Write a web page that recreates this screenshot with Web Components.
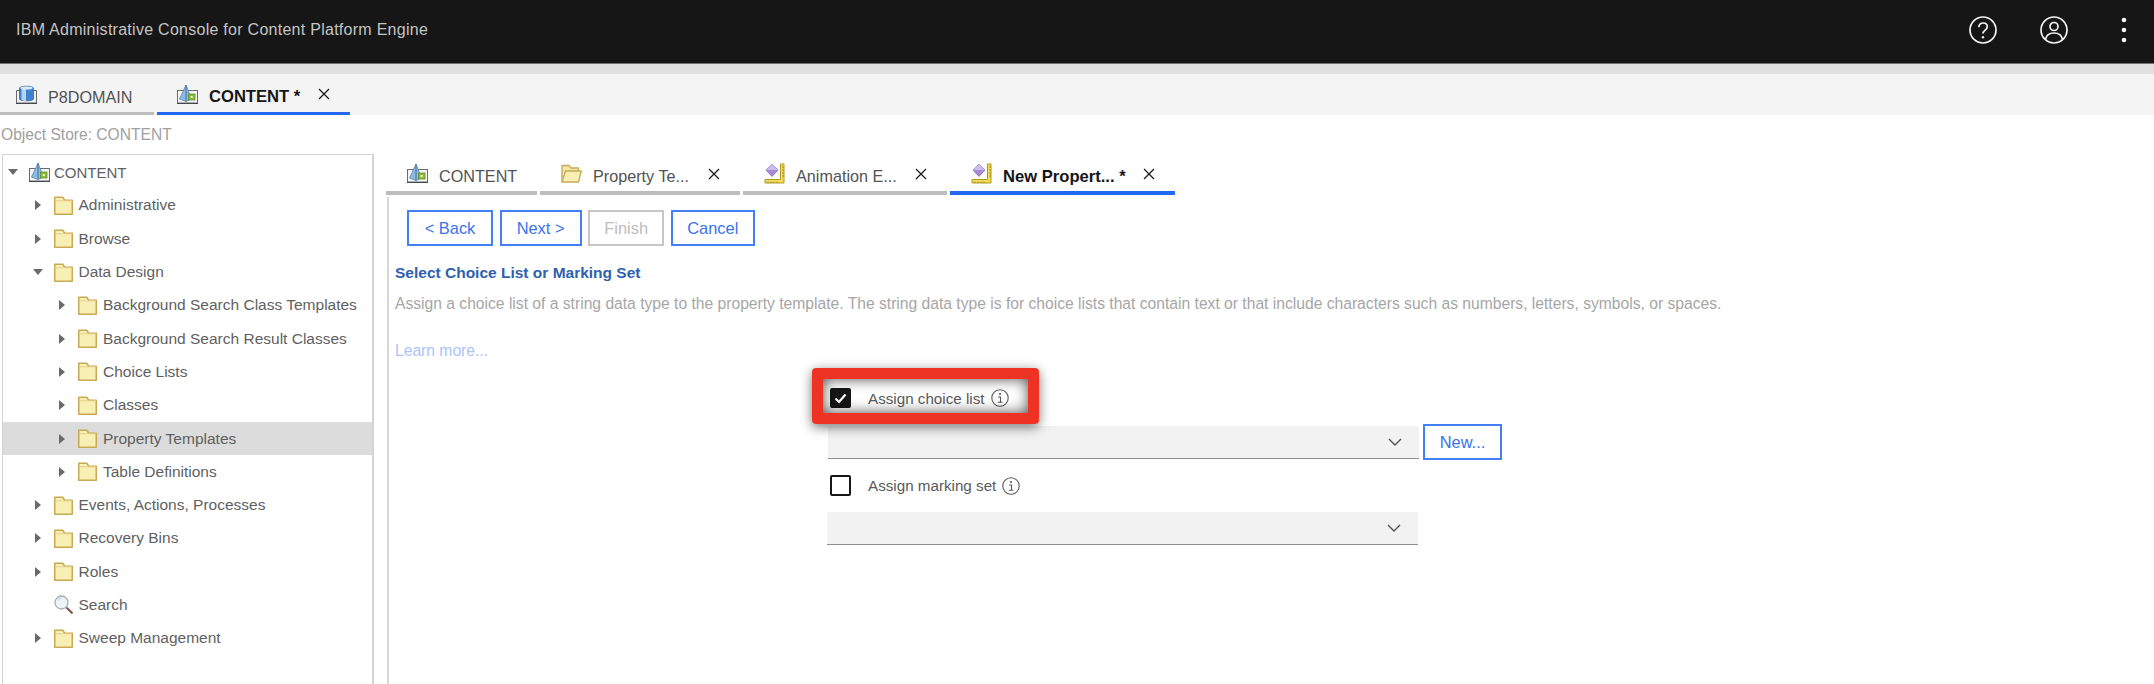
<!DOCTYPE html>
<html lang="en">
<head>
<meta charset="utf-8">
<title>IBM Administrative Console for Content Platform Engine</title>
<style>
  html, body { margin: 0; height: 100%; overflow: hidden; background: #fff; }
  body { font-family: "Liberation Sans", Arial, sans-serif; font-size: 15.5px; }
  console-app { height: 100%; }
</style>
</head>
<body>
<console-app></console-app>

<script>
const ICONS = {
  store: `<svg width="21" height="19" viewBox="0 0 21 19">
      <rect x=".5" y="5.500" width="20" height="12.500" fill="#f4f4f4" stroke="#6a6d70"/>
      <path d="M0 18h21v1H0z" fill="#44474b"/>
      <path d="M9 0 2.500 14l6.500 2.500L14.500 14z" fill="#8db9e4" stroke="#4a7cab" stroke-width=".7"/>
      <path d="M9 0v16.500" stroke="#2f5f90" stroke-width=".8"/>
      <rect x="11.500" y="9" width="6.500" height="6" fill="#8cbb3c" stroke="#5e8a22" stroke-width=".7"/>
      <rect x="13.700" y="11" width="2" height="2" fill="#eef5d8"/>
    </svg>`,
  cylinder: `<svg width="21" height="19" viewBox="0 0 21 19">
      <path d="M.5 5.500h20V18H.5z" fill="#f2f2f2" stroke="#6a6d70"/>
      <path d="M0 18h21v1H0z" fill="#44474b"/>
      <path d="M3.500 3C3.500.6 17.500.6 17.500 3v11c0 2.400-14 2.400-14 0z" fill="#3f80d0" stroke="#2b5f9f" stroke-width=".7"/>
      <path d="M5.500 3.500h4.500v12.500c-2.200 0-4.500-.6-4.500-1.500z" fill="#b5d4f4"/>
      <ellipse cx="10.500" cy="3" rx="6.300" ry="1.600" fill="#dbe9f8"/>
    </svg>`,
  folder: `<svg width="19" height="19" viewBox="0 0 19 19">
      <path d="M.75 18.250V1.250h8l2 3h7.500v14z" fill="#f8efb4" stroke="#c8a955" stroke-width="1.500" stroke-linejoin="round"/>
      <path d="M1.500 4.750h16.250" stroke="#e3cf8b"/>
    </svg>`,
  folderOpen: `<svg width="21" height="19" viewBox="0 0 21 19">
      <path d="M1 18V1.500h7l2 2.500h7.500v3" fill="#f2e6a8" stroke="#c8a955" stroke-width="1.300" stroke-linejoin="round"/>
      <path d="M1 18 4.500 7H20.300L17.500 18z" fill="#f8efb4" stroke="#c8a955" stroke-width="1.300" stroke-linejoin="round"/>
    </svg>`,
  template: `<svg width="21" height="21" viewBox="0 0 21 21">
      <path d="M16.500 1H20v19H1v-3.500h15.500z" fill="#f3dc5a" stroke="#b09a22"/>
      <path d="M4 18.500v1.500M7 18.500v1.500M10 18.500v1.500M13 18.500v1.500M18 4h2M18 7h2M18 10h2M18 13h2" stroke="#8f7d18" stroke-width=".8"/>
      <path d="M8 1 14 7 8 13.500 2 7z" fill="#a68ad8" stroke="#7557b0" stroke-width=".7"/>
      <path d="M8 1 2 7h12z" fill="#cdbcf0"/>
    </svg>`,
  search: `<svg width="20" height="20" viewBox="0 0 20 20">
      <circle cx="7.500" cy="7.500" r="6.500" fill="#eef3f7" stroke="#a9adb1" stroke-width="1.300"/>
      <path d="M4 5.500a4.500 4.500 0 0 1 4-2.500" fill="none" stroke="#c6ccd2" stroke-width="1.200"/>
      <path d="m12.500 12.500 6 6" stroke="#8a4b3f" stroke-width="2"/>
    </svg>`,
  close: `<svg width="12" height="12" viewBox="0 0 12 12"><path d="m1 1 10 10M11 1 1 11" stroke="#161616" stroke-width="1.200" fill="none"/></svg>`,
  info: `<svg width="18" height="18" viewBox="0 0 18 18">
      <circle cx="9" cy="9" r="8.200" fill="none" stroke="#5a5a5a" stroke-width="1.100"/>
      <circle cx="9" cy="5" r="1.100" fill="#5a5a5a"/>
      <path d="M7 8h2.500v5M6.800 13.200h4.600" fill="none" stroke="#5a5a5a" stroke-width="1.100"/>
    </svg>`,
  chevron: `<svg width="14" height="8" viewBox="0 0 14 8"><path d="m1 1 6 6 6-6" fill="none" stroke="#525252" stroke-width="1.400"/></svg>`
};

class ConsoleHeader extends HTMLElement {
  constructor() {
    super();
    this.attachShadow({ mode: 'open' }).innerHTML = `
      <style>
        :host { display: flex; align-items: center; justify-content: space-between; box-sizing: border-box;
                height: 64px; background: #161616; border-bottom: 1px solid #6f6f6f; padding: 0 26px 3px 16px; flex: none; }
        .title { color: #c4c4c4; font-size: 16px; letter-spacing: .27px; }
        .actions { display: flex; align-items: center; gap: 43px; }
        svg { display: block; }
      </style>
      <span class="title">IBM Administrative Console for Content Platform Engine</span>
      <div class="actions">
        <svg width="28" height="28" viewBox="0 0 28 28" fill="none" stroke="#f4f4f4" stroke-width="1.700">
          <circle cx="14" cy="14" r="13"/>
          <path d="M9.800 11.200c0-2.600 1.900-4.200 4.300-4.200 2.500 0 4.200 1.600 4.200 3.700 0 3.300-4.300 3.400-4.300 6.800"/>
          <circle cx="14" cy="21.200" r="1.200" fill="#f4f4f4" stroke="none"/>
        </svg>
        <svg width="28" height="28" viewBox="0 0 28 28" fill="none" stroke="#f4f4f4" stroke-width="1.700">
          <circle cx="14" cy="14" r="13"/>
          <circle cx="14" cy="10.500" r="4"/>
          <path d="M5.500 23.500c.8-4.500 3.500-6.500 8.500-6.500s7.700 2 8.500 6.500"/>
        </svg>
        <svg width="8" height="26" viewBox="0 0 8 26" fill="#f4f4f4" style="margin-left:9px">
          <circle cx="4" cy="3" r="2.300"/><circle cx="4" cy="13" r="2.300"/><circle cx="4" cy="23" r="2.300"/>
        </svg>
      </div>`;
  }
}

class TabItem extends HTMLElement {
  connectedCallback() {
    const active = this.hasAttribute('active');
    const closable = this.hasAttribute('closable');
    const w = this.getAttribute('width');
    this.attachShadow({ mode: 'open' }).innerHTML = `
      <style>
        :host { display: flex; align-items: center; box-sizing: border-box; height: 100%; width: ${w}px;
                padding: 8px 20px 0 ${this.getAttribute('pad') || 21}px; flex: none;
                border-bottom: ${this.getAttribute('line') || 4}px solid ${active ? '#2468f0' : '#bdbdbd'}; }
        .icon { display: flex; margin: 0 11px 6px 0; }
        .label { flex: 1; white-space: nowrap; color: ${active ? '#161616' : '#525252'};
                 font-size: ${active ? 16.6 : 16.2}px; font-weight: ${active ? 700 : 400}; }
        .close { display: flex; margin-bottom: 6px; }
      </style>
      <span class="icon">${ICONS[this.getAttribute('icon')]}</span>
      <span class="label">${this.getAttribute('label')}</span>
      ${closable ? `<span class="close">${ICONS.close}</span>` : ''}`;
  }
}

class TreeRow extends HTMLElement {
  connectedCallback() {
    const level = Number(this.getAttribute('level') || 0);
    const state = this.getAttribute('state');
    const arrow = state === 'open'
      ? '<svg width="10" height="6" viewBox="0 0 10 6"><path d="M0 0h10L5 6z" fill="#6a6a6a"/></svg>'
      : state === 'closed'
        ? '<svg width="6" height="10" viewBox="0 0 6 10"><path d="M0 0l6 5-6 5z" fill="#6a6a6a"/></svg>'
        : '';
    this.attachShadow({ mode: 'open' }).innerHTML = `
      <style>
        :host { display: flex; align-items: center; box-sizing: border-box; height: 33.3px; flex: none;
                padding-left: ${level * 24.5}px; color: #5f5f5f; font-size: ${level ? 15.5 : 15}px; white-space: nowrap; }
        :host([selected]) { background: #dcdcdc; }
        .arrow { width: 20px; margin-right: 6px; display: flex; justify-content: center; flex: none; }
        .icon { display: flex; width: 25px; flex: none; }
      </style>
      <span class="arrow">${arrow}</span>
      <span class="icon">${ICONS[this.getAttribute('icon') || 'folder']}</span>
      <slot></slot>`;
  }
}

class TreePanel extends HTMLElement {
  constructor() {
    super();
    this.attachShadow({ mode: 'open' }).innerHTML = `
      <style>
        :host { display: flex; flex-direction: column; box-sizing: border-box; width: 372px; margin-left: 2px; flex: none;
                padding-top: .5px; border: 1px solid #d4d4d4; border-bottom: 0; border-right-width: 2px; }
      </style>
      <slot></slot>`;
  }
}

class WizButton extends HTMLElement {
  constructor() {
    super();
    this.attachShadow({ mode: 'open' }).innerHTML = `
      <style>
        :host { display: inline-flex; align-items: center; justify-content: center; box-sizing: border-box;
                height: 36px; border: 2px solid #4480f5; color: #3a72f0; background: #fff; font-size: 16.4px; flex: none; }
        :host([disabled]) { border-color: #c6c6c6; color: #bdbdbd; }
      </style>
      <slot></slot>`;
  }
}

class ComboBox extends HTMLElement {
  constructor() {
    super();
    this.attachShadow({ mode: 'open' }).innerHTML = `
      <style>
        :host { display: flex; align-items: center; justify-content: flex-end; box-sizing: border-box;
                width: 591px; height: 33px; background: #f2f2f2; border-bottom: 1px solid #8d8d8d; padding-right: 17px; flex: none; }
        svg { display: block; }
      </style>
      ${ICONS.chevron}`;
  }
}

class CheckRow extends HTMLElement {
  connectedCallback() {
    const checked = this.hasAttribute('checked');
    this.attachShadow({ mode: 'open' }).innerHTML = `
      <style>
        :host { display: flex; align-items: center; position: relative; height: 34px; margin-left: 2px;
                color: #5a5a5a; font-size: 15.2px; }
        .box { box-sizing: border-box; width: 20.5px; height: 20.5px; border: 2px solid #161616; border-radius: 2px;
               background: ${checked ? '#161616' : '#fff'}; margin-right: 17.5px; display: flex; align-items: center; justify-content: center; }
        .info { display: flex; margin-left: 6px; }
        .mark { position: absolute; left: -18px; top: -13px; box-sizing: border-box; width: 227px; height: 56px;
                border: 11px solid #ee3224; border-radius: 4px;
                box-shadow: 0 3px 12px rgba(0,0,0,.55), inset 0 0 14px rgba(0,0,0,.7); }
      </style>
      <span class="box">${checked ? '<svg width="13" height="11" viewBox="0 0 13 11"><path d="m1.500 5.500 3.500 3.500 6.500-7.500" fill="none" stroke="#fff" stroke-width="2.200"/></svg>' : ''}</span>
      <slot></slot>
      <span class="info">${ICONS.info}</span>
      ${this.hasAttribute('highlight') ? '<span class="mark"></span>' : ''}`;
  }
}

class WizardPage extends HTMLElement {
  constructor() {
    super();
    this.attachShadow({ mode: 'open' }).innerHTML = `
      <style>
        :host { display: block; flex: 1; min-height: 0; margin: 2px 0 0 1px; border-left: 2px solid #d8d8d8; }
        .buttons { display: flex; gap: 6.6px; padding: 13px 0 0 18px; }
        h2 { margin: 17px 0 0 6px; font-size: 15.5px; line-height: 20px; color: #2f5fb0; font-weight: 700; }
        p { margin: 11px 0 0 6px; font-size: 15.65px; line-height: 20px; color: #a6a6a6; white-space: nowrap; }
        a { display: block; margin: 27px 0 0 6px; font-size: 15.65px; line-height: 20px; color: #a9c3fb; }
        form { display: block; margin: 20px 0 0 439px; }
        .combo { display: flex; align-items: center; gap: 4px; margin-top: 9px; }
        .second { margin-top: 8.5px; }
        .last { margin: 9.5px 0 0 -1px; }
      </style>
      <div class="buttons">
        <wiz-button style="width:86px">&lt; Back</wiz-button>
        <wiz-button style="width:82px">Next &gt;</wiz-button>
        <wiz-button style="width:76px" disabled>Finish</wiz-button>
        <wiz-button style="width:84px">Cancel</wiz-button>
      </div>
      <h2>Select Choice List or Marking Set</h2>
      <p>Assign a choice list of a string data type to the property template. The string data type is for choice lists that contain text or that include characters such as numbers, letters, symbols, or spaces.</p>
      <a>Learn more...</a>
      <form>
        <check-row checked highlight>Assign choice list</check-row>
        <div class="combo"><combo-box></combo-box><wiz-button style="width:79px">New...</wiz-button></div>
        <check-row class="second">Assign marking set</check-row>
        <combo-box class="last"></combo-box>
      </form>`;
  }
}

class ConsoleApp extends HTMLElement {
  constructor() {
    super();
    this.attachShadow({ mode: 'open' }).innerHTML = `
      <style>
        :host { display: flex; flex-direction: column; overflow: hidden; }
        .band { height: 10px; background: #e0e0e0; flex: none; }
        .top-tabs { display: flex; gap: 3px; height: 41px; background: #f4f4f4; flex: none; }
        .store { height: 39px; line-height: 39px; padding-left: 1px; color: #a0a0a0; font-size: 15.6px; flex: none; }
        .main { flex: 1; display: flex; min-height: 0; }
        .right { flex: 1; min-width: 0; display: flex; flex-direction: column; margin-left: 12px; }
        .tabs { display: flex; gap: 3px; height: 41px; flex: none; }
      </style>
      <console-header></console-header>
      <div class="band"></div>
      <div class="top-tabs">
        <tab-item icon="cylinder" label="P8DOMAIN" width="154" pad="16" line="3"></tab-item>
        <tab-item icon="store" label="CONTENT *" width="193" pad="20" line="3" active closable></tab-item>
      </div>
      <div class="store">Object Store: CONTENT</div>
      <div class="main">
        <tree-panel>
          <tree-row icon="store" state="open">CONTENT</tree-row>
          <tree-row level="1" state="closed">Administrative</tree-row>
          <tree-row level="1" state="closed">Browse</tree-row>
          <tree-row level="1" state="open">Data Design</tree-row>
          <tree-row level="2" state="closed">Background Search Class Templates</tree-row>
          <tree-row level="2" state="closed">Background Search Result Classes</tree-row>
          <tree-row level="2" state="closed">Choice Lists</tree-row>
          <tree-row level="2" state="closed">Classes</tree-row>
          <tree-row level="2" state="closed" selected>Property Templates</tree-row>
          <tree-row level="2" state="closed">Table Definitions</tree-row>
          <tree-row level="1" state="closed">Events, Actions, Processes</tree-row>
          <tree-row level="1" state="closed">Recovery Bins</tree-row>
          <tree-row level="1" state="closed">Roles</tree-row>
          <tree-row level="1" icon="search">Search</tree-row>
          <tree-row level="1" state="closed">Sweep Management</tree-row>
        </tree-panel>
        <div class="right">
          <div class="tabs">
            <tab-item icon="store" label="CONTENT" width="151"></tab-item>
            <tab-item icon="folderOpen" label="Property Te..." width="200" closable></tab-item>
            <tab-item icon="template" label="Animation E..." width="204" closable></tab-item>
            <tab-item icon="template" label="New Propert... *" width="225" active closable></tab-item>
          </div>
          <wizard-page></wizard-page>
        </div>
      </div>`;
  }
}

customElements.define('console-header', ConsoleHeader);
customElements.define('tab-item', TabItem);
customElements.define('tree-row', TreeRow);
customElements.define('tree-panel', TreePanel);
customElements.define('wiz-button', WizButton);
customElements.define('combo-box', ComboBox);
customElements.define('check-row', CheckRow);
customElements.define('wizard-page', WizardPage);
customElements.define('console-app', ConsoleApp);
</script>
</body>
</html>
